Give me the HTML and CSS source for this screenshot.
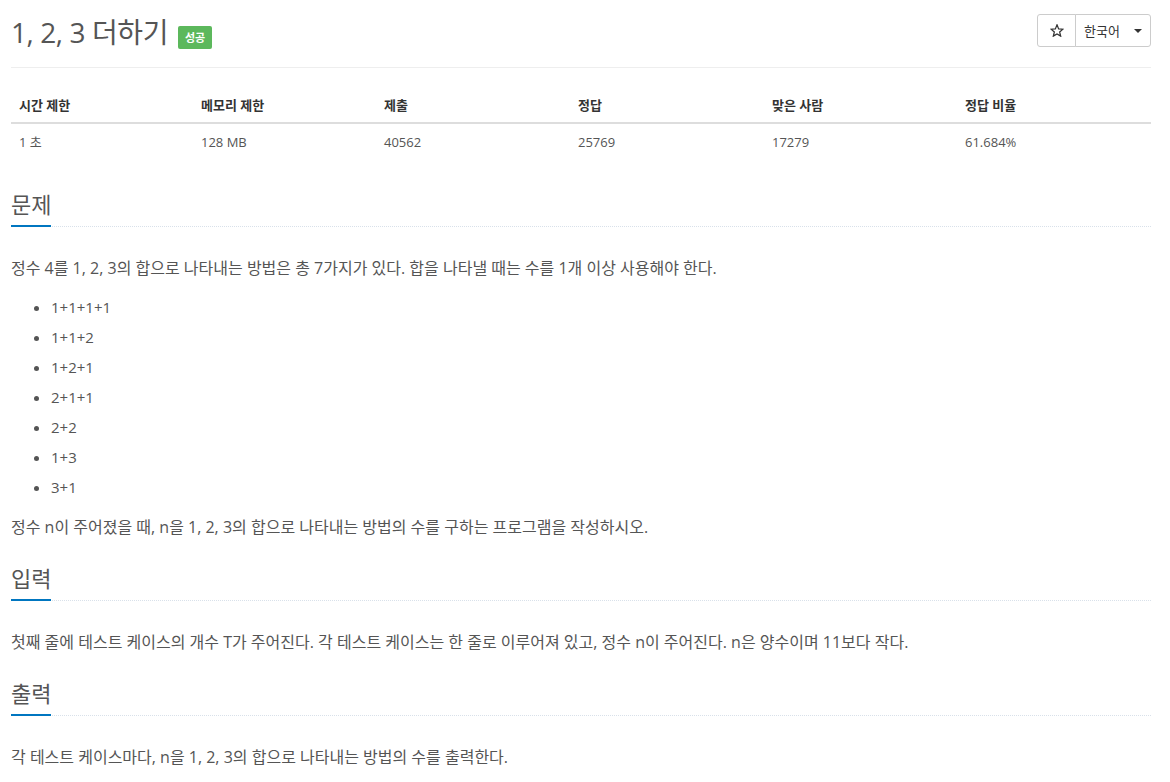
FILE: index.html
```html
<!DOCTYPE html>
<html lang="ko">
<head>
<meta charset="utf-8">
<title>1, 2, 3 더하기</title>
<link rel="stylesheet" href="styles.css">
</head>
<body>
<div class="container">
  <div class="page-header">
    <h1 class="title"><span class="title-text">1, 2, 3 더하기</span><span class="badge">성공</span></h1>
    <div class="btn-group">
      <button class="btn btn-star" type="button" aria-label="즐겨찾기"><svg class="star-icon" width="14" height="13" viewBox="0 0 24 23"><polygon points="12,1.5 14.9,8.6 22.5,9.2 16.7,14.1 18.5,21.5 12,17.5 5.5,21.5 7.3,14.1 1.5,9.2 9.1,8.6" fill="none" stroke="#333333" stroke-width="2.2" stroke-linejoin="miter"/></svg></button>
      <button class="btn btn-lang" type="button">한국어<span class="caret"></span></button>
    </div>
  </div>

  <table class="info-table">
    <thead>
      <tr>
        <th class="c1">시간 제한</th>
        <th class="c2">메모리 제한</th>
        <th class="c3">제출</th>
        <th class="c4">정답</th>
        <th class="c5">맞은 사람</th>
        <th class="c6">정답 비율</th>
      </tr>
    </thead>
    <tbody>
      <tr>
        <td>1 초</td>
        <td>128 MB</td>
        <td>40562</td>
        <td>25769</td>
        <td>17279</td>
        <td>61.684%</td>
      </tr>
    </tbody>
  </table>

  <section class="section">
    <div class="headline"><h2>문제</h2></div>
    <p>정수 4를 1, 2, 3의 합으로 나타내는 방법은 총 7가지가 있다. 합을 나타낼 때는 수를 1개 이상 사용해야 한다.</p>
    <ul class="list">
      <li>1+1+1+1</li>
      <li>1+1+2</li>
      <li>1+2+1</li>
      <li>2+1+1</li>
      <li>2+2</li>
      <li>1+3</li>
      <li>3+1</li>
    </ul>
    <p>정수 n이 주어졌을 때, n을 1, 2, 3의 합으로 나타내는 방법의 수를 구하는 프로그램을 작성하시오.</p>
  </section>

  <section class="section">
    <div class="headline"><h2>입력</h2></div>
    <p>첫째 줄에 테스트 케이스의 개수 T가 주어진다. 각 테스트 케이스는 한 줄로 이루어져 있고, 정수 n이 주어진다. n은 양수이며 11보다 작다.</p>
  </section>

  <section class="section">
    <div class="headline"><h2>출력</h2></div>
    <p>각 테스트 케이스마다, n을 1, 2, 3의 합으로 나타내는 방법의 수를 출력한다.</p>
  </section>
</div>
</body>
</html>
```

FILE: styles.css
```css
html, body {
  margin: 0;
  padding: 0;
  background: #ffffff;
}

body {
  font-family: "Open Sans", "Noto Sans CJK KR", sans-serif;
  color: #555555;
  font-size: 13px;
  line-height: 1.6;
}

.container {
  width: 1140px;
  padding-left: 11px;
  box-sizing: content-box;
}

/* header */
.page-header {
  display: flex;
  justify-content: space-between;
  align-items: flex-start;
  height: 68px;
  box-sizing: border-box;
  padding-top: 14px;
  border-bottom: 1px solid #eeeeee;
}

.title {
  margin: 0;
  font-size: 28px;
  font-weight: 400;
  line-height: 36px;
  color: #555555;
  display: flex;
  align-items: flex-start;
}

.title-text {
  letter-spacing: -0.015em;
}

.badge {
  display: inline-block;
  margin-left: 10px;
  margin-top: 12px;
  width: 34px;
  height: 23px;
  line-height: 23px;
  text-align: center;
  font-size: 11px;
  font-weight: 700;
  color: #ffffff;
  background: #5cb85c;
  border-radius: 2px;
}

.btn-group {
  display: flex;
}

.btn {
  height: 33px;
  box-sizing: border-box;
  border: 1px solid #cccccc;
  background: #ffffff;
  color: #333333;
  font-family: "Open Sans", "Noto Sans CJK KR", sans-serif;
  padding: 0;
  margin: 0;
  cursor: pointer;
}

.btn-star {
  width: 39px;
  border-radius: 3px 0 0 3px;
  display: flex;
  align-items: center;
  justify-content: center;
}

.star-icon {
  display: block;
  margin-top: -1px;
}

.btn-lang {
  width: 76px;
  margin-left: -1px;
  font-size: 13px;
  border-radius: 0 3px 3px 0;
  display: flex;
  align-items: center;
  padding-left: 8px;
}

.caret {
  display: inline-block;
  width: 0;
  height: 0;
  margin-left: 14px;
  border-top: 4px solid #333333;
  border-left: 4px solid transparent;
  border-right: 4px solid transparent;
}

/* table */
.info-table {
  width: 1140px;
  border-collapse: collapse;
  margin-top: 19px;
  margin-bottom: 29px;
  table-layout: fixed;
  color: #333333;
}

.info-table th,
.info-table td {
  text-align: left;
  padding: 8px 8px;
  line-height: 20px;
  font-size: 13px;
}

.info-table th {
  font-weight: 700;
  border-bottom: 2px solid #dddddd;
  padding-bottom: 7px;
}

.info-table td {
  color: #555555;
}

.c1 { width: 166px; }
.c2 { width: 167px; }
.c3 { width: 178px; }
.c4 { width: 178px; }
.c5 { width: 177px; }
.c6 { width: 178px; }

/* sections */
.section {
  margin-top: 23px;
}

.headline {
  display: flex;
  border-bottom: 1px dotted #d9e1ea;
  margin-bottom: 28px;
}

.headline h2 {
  margin: 0 0 -1px 0;
  font-size: 22px;
  font-weight: 400;
  line-height: 30px;
  color: #555555;
  padding-bottom: 6px;
  border-bottom: 2px solid #0076c0;
}

.section p {
  margin: 0 0 11px 0;
  font-size: 16px;
  line-height: 26px;
  color: #555555;
}

.section > :last-child {
  margin-bottom: 0;
}

.list {
  margin: 0 0 12px 0;
  padding-left: 40px;
  font-size: 15px;
  line-height: 30px;
  color: #555555;
}
```
